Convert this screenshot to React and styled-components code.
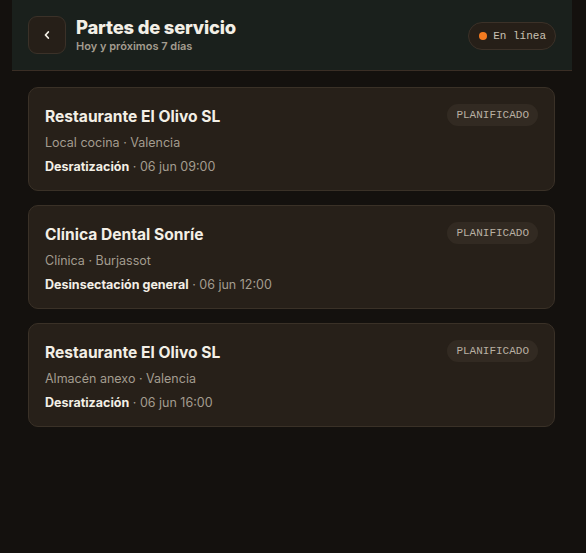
import React from "react";
import styled, { createGlobalStyle } from "styled-components";

const services = [
  { client: "Restaurante El Olivo SL", place: "Local cocina", city: "Valencia", type: "Desratización", when: "06 jun 09:00", status: "PLANIFICADO" },
  { client: "Clínica Dental Sonríe", place: "Clínica", city: "Burjassot", type: "Desinsectación general", when: "06 jun 12:00", status: "PLANIFICADO" },
  { client: "Restaurante El Olivo SL", place: "Almacén anexo", city: "Valencia", type: "Desratización", when: "06 jun 16:00", status: "PLANIFICADO" },
];

const GlobalStyle = createGlobalStyle`
  html, body {
    margin: 0;
    background: #14110e;
  }
  body {
    font-family: Inter, "Noto Sans", sans-serif;
    color: #f3efe6;
    -webkit-font-smoothing: antialiased;
  }
`;

const Page = styled.div`
  min-height: 553px;
  padding: 0 14px 0 12px;
  box-sizing: border-box;
`;

const Header = styled.header`
  height: 70px;
  display: flex;
  align-items: center;
  padding: 0 16px;
  background: #1a201c;
  border-bottom: 1px solid #3a2e25;
`;

const BackButton = styled.button`
  width: 38px;
  height: 38px;
  display: flex;
  align-items: center;
  justify-content: center;
  padding: 0;
  background: #261f18;
  border: 1px solid #3b3128;
  border-radius: 9px;
  color: #f3efe6;
  cursor: pointer;
`;

const TitleBlock = styled.div`
  flex: 1;
  margin-left: 10px;
  margin-top: -1px;
`;

const Title = styled.h1`
  margin: 0;
  font-size: 18.4px;
  line-height: 24px;
  font-weight: 800;
  letter-spacing: -0.2px;
  color: #f3efe6;
`;

const Subtitle = styled.div`
  font-size: 11px;
  line-height: 15px;
  font-weight: 600;
  color: #a39c8f;
`;

const StatusPill = styled.div`
  display: flex;
  align-items: center;
  gap: 6px;
  height: 28px;
  padding: 0 9px 0 10px;
  box-sizing: border-box;
  background: #261f18;
  border: 1px solid #3b3128;
  border-radius: 14px;
  font-family: "Liberation Mono", "DejaVu Sans Mono", monospace;
  font-size: 11px;
  color: #c9c1b3;
  margin-top: 1px;
`;

const Dot = styled.span`
  width: 8px;
  height: 8px;
  border-radius: 50%;
  background: #f47b20;
`;

const List = styled.main`
  display: flex;
  flex-direction: column;
  gap: 14px;
  padding: 16px 17px 16px 16px;
`;

const Card = styled.article`
  display: flex;
  align-items: flex-start;
  justify-content: space-between;
  padding: 17px 16px 13px 16px;
  background: #272019;
  border: 1px solid #3a3127;
  border-radius: 10px;
`;

const CardBody = styled.div`
  display: flex;
  flex-direction: column;
  gap: 4px;
`;

const Client = styled.div`
  font-size: 15.6px;
  line-height: 24px;
  font-weight: 700;
  color: #f3efe6;
`;

const Meta = styled.div`
  font-size: 12.5px;
  line-height: 20px;
  color: #a39c8f;
`;

const Strong = styled.span`
  font-weight: 700;
  color: #f3efe6;
`;

const Badge = styled.span`
  height: 22px;
  display: flex;
  align-items: center;
  padding: 0 9px;
  margin-top: -1px;
  background: #322a22;
  border-radius: 11px;
  font-family: "Liberation Mono", "DejaVu Sans Mono", monospace;
  font-size: 11px;
  color: #b9b0a2;
`;

export default function App() {
  return (
    <Page>
      <GlobalStyle />
      <Header>
        <BackButton aria-label="Volver">
          <svg width="10" height="10" viewBox="0 0 10 10" fill="none">
            <path d="M6.3 2 L3.5 5 L6.3 8" stroke="currentColor" strokeWidth="1.8" strokeLinecap="round" strokeLinejoin="round" />
          </svg>
        </BackButton>
        <TitleBlock>
          <Title>Partes de servicio</Title>
          <Subtitle>Hoy y próximos 7 días</Subtitle>
        </TitleBlock>
        <StatusPill>
          <Dot />
          En línea
        </StatusPill>
      </Header>
      <List>
        {services.map((s, i) => (
          <Card key={i}>
            <CardBody>
              <Client>{s.client}</Client>
              <Meta>{s.place} · {s.city}</Meta>
              <Meta><Strong>{s.type}</Strong> · {s.when}</Meta>
            </CardBody>
            <Badge>{s.status}</Badge>
          </Card>
        ))}
      </List>
    </Page>
  );
}
